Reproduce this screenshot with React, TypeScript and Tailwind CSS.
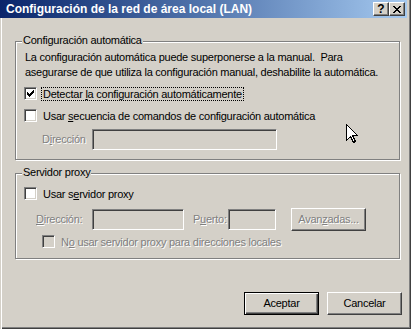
import React from "react";

const disabled = "text-[#808080] [text-shadow:1px_1px_0_#fff]";
const sunken =
  "border border-t-[#808080] border-l-[#808080] border-r-white border-b-white shadow-[inset_1px_1px_0_#404040,inset_-1px_-1px_0_#D4D0C8]";
const raised =
  "border border-t-white border-l-white border-r-[#404040] border-b-[#404040] shadow-[inset_-1px_-1px_0_#808080]";

function Check() {
  return (
    <svg width="13" height="13" viewBox="0 0 13 13" shapeRendering="crispEdges" className="absolute left-[-1px] top-[-1px]">
      <path
        d="M3 5h1v3H3z M4 6h1v3H4z M5 7h1v3H5z M6 6h1v3H6z M7 5h1v3H7z M8 4h1v3H8z M9 3h1v3H9z"
        fill="#000"
      />
    </svg>
  );
}

function Box({ checked, dis }: { checked?: boolean; dis?: boolean }) {
  return (
    <div className={`relative w-[13px] h-[13px] shrink-0 ${sunken} ${dis ? "bg-[#D4D0C8]" : "bg-white"}`}>
      {checked && <Check />}
    </div>
  );
}

function Group({
  label,
  h,
  className = "",
  children,
}: {
  label: string;
  h: string;
  className?: string;
  children: React.ReactNode;
}) {
  return (
    <div
      className={`w-[385px] ${h} border border-[#808080] shadow-[inset_1px_1px_0_#fff,1px_1px_0_#fff] flex flex-col ${className}`}
    >
      <div className="-mt-[9px] ml-[6px] px-[1px] w-fit bg-[#D4D0C8] leading-[15px]">{label}</div>
      {children}
    </div>
  );
}

export default function App() {
  return (
    <div className="relative w-[411px] h-[329px] bg-[#D4D0C8] flex flex-col text-black text-[11px] tracking-[-0.25px] font-['Liberation_Sans',Arial,sans-serif] shadow-[inset_1px_0_0_#D4D0C8,inset_2px_0_0_#FFFFFF,inset_-1px_-1px_0_#404040,inset_-2px_-2px_0_#808080] overflow-hidden">
      {/* Title bar */}
      <div className="h-[18px] mr-[4px] flex items-center pl-[6px] pr-[2px] bg-linear-to-r from-[#0A246A] to-[#A6CAF0]">
        <div className="flex-1 text-white font-bold text-[12px] tracking-normal leading-[18px]">
          Configuración de la red de área local (LAN)
        </div>
        <div className={`w-[16px] h-[14px] bg-[#D4D0C8] ${raised} flex items-center justify-center font-bold text-[12px] leading-none tracking-normal`}>
          ?
        </div>
        <div className={`w-[16px] h-[14px] bg-[#D4D0C8] ${raised} flex items-center justify-center`}>
          <svg width="8" height="7" viewBox="0 0 8 7" shapeRendering="crispEdges">
            <path
              d="M0 0h2v1H0z M6 0h2v1H6z M1 1h2v1H1z M5 1h2v1H5z M2 2h4v1H2z M3 3h2v1H3z M2 4h4v1H2z M1 5h2v1H1z M5 5h2v1H5z M0 6h2v1H0z M6 6h2v1H6z"
              fill="#000"
            />
          </svg>
        </div>
      </div>

      <div className="flex flex-col pl-[15px]">
        {/* Group 1 */}
        <Group label="Configuración automática" h="h-[119px]" className="mt-[23px]">
          <p className="pl-[9px] mt-[2px] leading-[15px]">
            La configuración automática puede superponerse a la manual.&nbsp; Para
            <br />
            asegurarse de que utiliza la configuración manual, deshabilite la automática.
          </p>
          <div className="flex items-center pl-[8px] mt-[7px] h-[13px]">
            <Box checked />
            <span className="ml-[4px] px-[1px] h-[14px] leading-[12px] border border-dotted border-black">
              Detectar <span className="underline underline-offset-[1px]">l</span>a configuración automáticamente
            </span>
          </div>
          <div className="flex items-center pl-[8px] mt-[9px] h-[13px]">
            <Box />
            <span className="ml-[4px] px-[1px] h-[14px] leading-[12px] border border-transparent">
              Usar <span className="underline underline-offset-[1px]">s</span>ecuencia de comandos de configuración automática
            </span>
          </div>
          <div className="flex items-center pl-[26px] mt-[7px] h-[21px]">
            <span className={`w-[50px] ${disabled}`}>
              D<span className="underline underline-offset-[1px]">i</span>rección
            </span>
            <div className={`w-[185px] h-[21px] bg-[#D4D0C8] ${sunken}`} />
          </div>
        </Group>

        {/* Group 2 */}
        <Group label="Servidor proxy" h="h-[86px]" className="mt-[13px]">
          <div className="flex items-center pl-[8px] mt-[7px] h-[13px]">
            <Box />
            <span className="ml-[4px] px-[1px] h-[14px] leading-[12px] border border-transparent">
              Usar s<span className="underline underline-offset-[1px]">e</span>rvidor proxy
            </span>
          </div>
          <div className="flex items-center pl-[20px] mt-[8px] h-[23px]">
            <span className={`w-[56px] ${disabled}`}>
              <span className="underline underline-offset-[1px]">D</span>irección:
            </span>
            <div className={`w-[92px] h-[21px] bg-[#D4D0C8] ${sunken}`} />
            <span className={`ml-[9px] w-[35px] ${disabled}`}>
              P<span className="underline underline-offset-[1px]">u</span>erto:
            </span>
            <div className={`w-[48px] h-[21px] bg-[#D4D0C8] ${sunken}`} />
            <div className={`ml-[15px] w-[75px] h-[23px] ${raised} flex items-center justify-center ${disabled}`}>
              Avan<span className="underline underline-offset-[1px]">z</span>adas...
            </div>
          </div>
          <div className="flex items-center pl-[26px] mt-[4px] h-[13px]">
            <Box dis />
            <span className={`ml-[4px] px-[1px] h-[14px] leading-[12px] border border-transparent ${disabled}`}>
              N<span className="underline underline-offset-[1px]">o</span> usar servidor proxy para direcciones locales
            </span>
          </div>
        </Group>
      </div>

      {/* Buttons */}
      <div className="flex justify-end gap-[8px] pr-[9px] mt-[33px]">
        <div className="w-[75px] h-[23px] border border-black shadow-[inset_1px_1px_0_#fff,inset_-1px_-1px_0_#404040,inset_-2px_-2px_0_#808080] flex items-center justify-center">
          Aceptar
        </div>
        <div className={`w-[75px] h-[23px] ${raised} flex items-center justify-center`}>Cancelar</div>
      </div>

      {/* Mouse cursor */}
      <svg width="13" height="20" viewBox="0 0 13 20" className="absolute left-[346px] top-[124px]" shapeRendering="crispEdges">
        <path d="M0.5 0.5 L0.5 16.5 L4.5 12.5 L7.5 18.5 L9.5 17.5 L6.5 11.5 L11.5 11.5 Z" fill="#fff" stroke="#000" strokeWidth="1" />
      </svg>
    </div>
  );
}
